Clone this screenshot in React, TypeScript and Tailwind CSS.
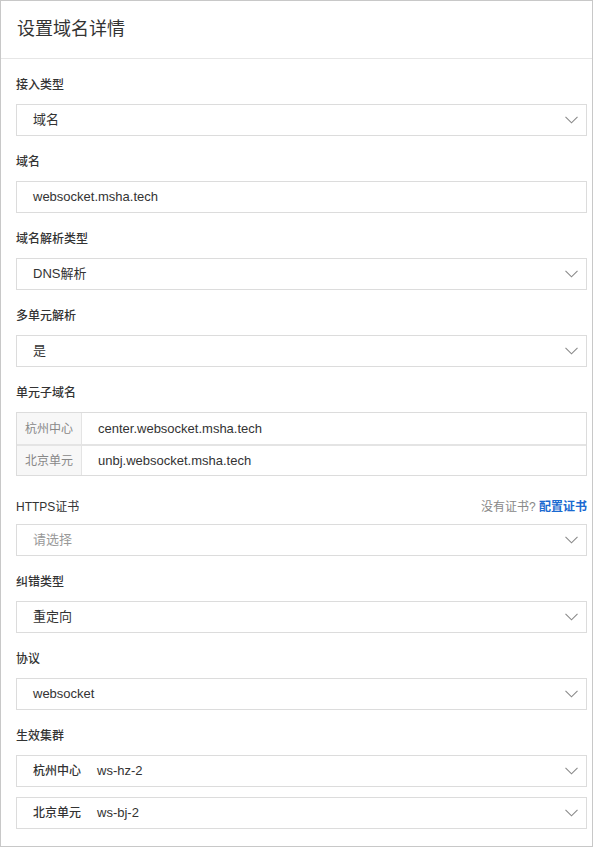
import React from "react";

const Chevron = () => (
  <svg width="13" height="8" viewBox="0 0 13 8" fill="none" className="mr-2 shrink-0">
    <polyline points="0.5,0.8 6.5,6.8 12.5,0.8" stroke="#8a8a8a" strokeWidth="1.1" />
  </svg>
);

const Label = ({ children }: { children: React.ReactNode }) => (
  <div className="h-5 mb-2.5 flex items-center pt-px text-[12px] font-medium text-[#333]">{children}</div>
);

const Select = ({ value, placeholder }: { value?: string; placeholder?: string }) => (
  <div className="h-8 border border-[#dcdcdc] flex items-center justify-between bg-white">
    <span className={`pl-4 text-[13px] ${value ? "text-[#333]" : "text-[#999]"}`}>{value ?? placeholder}</span>
    <Chevron />
  </div>
);

const units = [
  { name: "杭州中心", domain: "center.websocket.msha.tech", cluster: "ws-hz-2" },
  { name: "北京单元", domain: "unbj.websocket.msha.tech", cluster: "ws-bj-2" },
];

export default function App() {
  return (
    <div
      className="w-[593px] h-[847px] border border-[#c8c8c8] bg-white"
      style={{ fontFamily: '"Liberation Sans", "Noto Sans CJK SC", sans-serif' }}
    >
      {/* Header */}
      <div className="h-[58px] border-b border-[#e6e6e6] flex items-center pl-4">
        <h1 className="text-[18px] text-[#333] font-normal">设置域名详情</h1>
      </div>

      <div className="pl-[15px] pr-[5px] pt-[15px]">
        <div className="mb-[15px]">
          <Label>接入类型</Label>
          <Select value="域名" />
        </div>

        <div className="mb-[15px]">
          <Label>域名</Label>
          <div className="h-8 border border-[#dcdcdc] flex items-center">
            <span className="pl-4 text-[13px] text-[#333]">websocket.msha.tech</span>
          </div>
        </div>

        <div className="mb-[15px]">
          <Label>域名解析类型</Label>
          <Select value="DNS解析" />
        </div>

        <div className="mb-[15px]">
          <Label>多单元解析</Label>
          <Select value="是" />
        </div>

        <div className="mb-[21px]">
          <Label>单元子域名</Label>
          <div className="border border-[#dcdcdc]">
            {units.map((u, i) => (
              <div
                key={u.name}
                className={`flex h-[31px] ${i > 0 ? "border-t-2 border-[#e4e4e4]" : ""}`}
              >
                <div className="w-[65px] shrink-0 bg-[#f7f7f7] border-r border-[#e4e4e4] flex items-center justify-center text-[12px] text-[#888]">
                  {u.name}
                </div>
                <div className="flex items-center pl-4 text-[13px] text-[#333]">{u.domain}</div>
              </div>
            ))}
          </div>
        </div>

        <div className="mb-[15px]">
          <div className="h-5 mb-[7px] flex items-center justify-between text-[12px]">
            <span className="text-[#333]">HTTPS证书</span>
            <span className="text-[#888]">
              没有证书? <span className="font-semibold text-[#1a6ad1]">配置证书</span>
            </span>
          </div>
          <Select placeholder="请选择" />
        </div>

        <div className="mb-[15px]">
          <Label>纠错类型</Label>
          <Select value="重定向" />
        </div>

        <div className="mb-[15px]">
          <Label>协议</Label>
          <Select value="websocket" />
        </div>

        <div>
          <Label>生效集群</Label>
          <div className="flex flex-col gap-2.5">
            {units.map((u) => (
              <div key={u.name} className="h-8 border border-[#dcdcdc] flex items-center justify-between">
                <div className="flex items-center pl-4">
                  <span className="w-16 text-[12px] font-medium text-[#333]">{u.name}</span>
                  <span className="text-[13px] text-[#333]">{u.cluster}</span>
                </div>
                <Chevron />
              </div>
            ))}
          </div>
        </div>
      </div>
    </div>
  );
}
